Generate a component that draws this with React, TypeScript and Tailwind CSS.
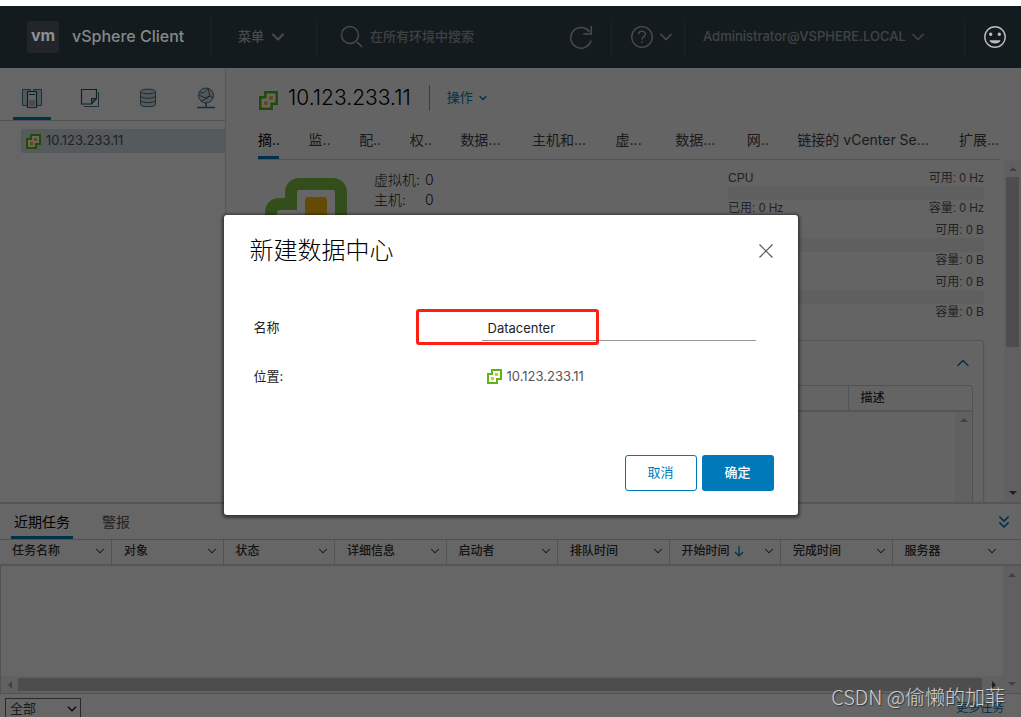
import { ChevronDown, ChevronUp, ChevronsDown } from 'lucide-react'

const TABS = [
  { label: '摘..', width: 'w-[21px]' },
  { label: '监..', width: 'w-[21px]' },
  { label: '配..', width: 'w-[21px]' },
  { label: '权..', width: 'w-[21px]' },
  { label: '数据...', width: 'w-[42px]' },
  { label: '主机和...', width: 'w-[54px]' },
  { label: '虚...', width: 'w-[30px]' },
  { label: '数据...', width: 'w-[42px]' },
  { label: '网..', width: 'w-[21px]' },
  { label: '链接的 vCenter Se...', width: 'w-[132px]' },
  { label: '扩展...', width: 'w-[42px]' },
]

const USAGE = [
  { name: 'CPU', free: '可用: 0 Hz', used: '已用: 0 Hz', total: '容量: 0 Hz' },
  { name: '内存', free: '可用: 0 B', used: '已用: 0 B', total: '容量: 0 B' },
  { name: '存储', free: '可用: 0 B', used: '已用: 0 B', total: '容量: 0 B' },
]

const COLUMNS = [
  '任务名称',
  '对象',
  '状态',
  '详细信息',
  '启动者',
  '排队时间',
  '开始时间',
  '完成时间',
  '服务器',
]

function VCenterIcon({ className }: { className: string }) {
  return (
    <svg viewBox="0 0 15 15" className={className} aria-hidden="true">
      <path d="M5 1h9v9h-4v4H1V5h4z" fill="#fff" stroke="#5eb715" strokeWidth="2" />
      <path d="M8 4h3v3H8zM4 8h3v3H4z" fill="#fdb32b" />
    </svg>
  )
}

function VCenterLogo() {
  return (
    <svg viewBox="0 0 82 82" className="size-[82px] shrink-0" aria-hidden="true">
      <path
        d="M35 6h32q9 0 9 9v34q0 9-9 9h-9v9q0 9-9 9H15q-9 0-9-9V35q0-9 9-9h11V15q0-9 9-9z"
        fill="#fff"
        stroke="#7fc241"
        strokeWidth="12"
      />
      <rect x="40" y="19" width="22" height="22" rx="3" fill="#fdb913" />
      <rect x="20" y="40" width="22" height="22" rx="3" fill="#fdb913" />
    </svg>
  )
}

function Arrow({ dir, className }: { dir: 'up' | 'down' | 'left' | 'right'; className: string }) {
  const paths = {
    up: 'M0 6l4-4 4 4z',
    down: 'M0 2l4 4 4-4z',
    left: 'M6 0L2 4l4 4z',
    right: 'M2 0l4 4-4 4z',
  }
  return (
    <svg viewBox="0 0 8 8" className={`size-2 shrink-0 fill-current ${className}`} aria-hidden="true">
      <path d={paths[dir]} />
    </svg>
  )
}

function Header() {
  return (
    <header className="flex h-[62px] shrink-0 items-center bg-[#34454f] text-[#b8bcbe]">
      <div className="flex h-10 w-[211px] shrink-0 items-center border-r border-[#4b565d] pl-[27px]">
        <span className="flex size-8 items-center justify-center rounded-[3px] bg-[#555f6e]">
          <span className="relative z-20 pb-1 font-['Inter'] text-base leading-none font-bold text-[#8e9092]">
            vm
          </span>
        </span>
        <a href="#home" className="relative z-20 ml-[13px] pb-0.5 text-base font-medium whitespace-nowrap text-[#85898b]">
          vSphere Client
        </a>
      </div>
      <button className="flex h-10 w-[106px] shrink-0 items-center gap-1 border-r border-[#4b565d] pl-[27px] text-[13px] font-medium">
        菜单
        <ChevronDown className="size-5" strokeWidth={2.5} />
      </button>
      <label className="flex min-w-0 flex-1 items-center gap-1.5 pl-[23px]">
        <svg viewBox="0 0 24 24" className="size-6 shrink-0" fill="none" stroke="currentColor" aria-hidden="true">
          <circle cx="10" cy="10" r="8.5" strokeWidth="1.4" />
          <path d="M17 17l5 5" strokeWidth="1.6" />
        </svg>
        <input
          type="text"
          aria-label="搜索"
          placeholder="在所有环境中搜索"
          className="w-full min-w-0 bg-transparent text-[13px] font-medium placeholder:text-[#9ba2a6]"
        />
      </label>
      <button aria-label="刷新" className="flex h-10 w-[43px] shrink-0 items-center border-r border-[#4b565d]">
        <svg viewBox="0 0 24 24" className="size-6" fill="none" stroke="currentColor" strokeWidth="1.5" aria-hidden="true">
          <path d="M22 15.5A10.3 10.3 0 1 1 20.5 7M22.3 1v8h-8" />
        </svg>
      </button>
      <button aria-label="帮助" className="flex h-10 w-[73px] shrink-0 items-center gap-0.5 border-r border-[#4b565d] pl-[18px]">
        <svg viewBox="0 0 24 24" className="size-6" fill="none" stroke="currentColor" strokeWidth="1.3" aria-hidden="true">
          <circle cx="12" cy="12" r="10.3" />
          <path d="M8.6 9.2c0-4 6.8-4 6.8 0 0 2.6-3.4 2.3-3.4 5.3M12 16.2v1.8" />
        </svg>
        <ChevronDown className="size-5" strokeWidth={2} />
      </button>
      <button className="flex h-10 w-[280px] shrink-0 items-center gap-0.5 border-r border-[#4b565d] pl-[18px] text-[13px] font-medium text-[#a3a9ac]">
        Administrator@VSPHERE.LOCAL
        <ChevronDown className="size-5" strokeWidth={2} />
      </button>
      <button aria-label="反馈" className="relative z-20 flex w-14 shrink-0 items-center pl-[18px] text-[#b9bdbf]">
        <svg viewBox="0 0 24 24" className="size-6" fill="none" stroke="currentColor" strokeWidth="1.4" aria-hidden="true">
          <circle cx="12" cy="12" r="10.2" />
          <circle cx="7.7" cy="9.3" r="1" fill="currentColor" />
          <circle cx="16.3" cy="9.3" r="1" fill="currentColor" />
          <path d="M6.500 15.2h11c-.8 4.4-10.2 4.4-11 0z" fill="currentColor" stroke="none" />
        </svg>
      </button>
    </header>
  )
}

function Inventory() {
  return (
    <aside className="w-[226px] shrink-0 border-r border-[#dadada]">
      <nav className="flex h-[53px] border-b border-[#ccc] pl-[13px] text-[#25556c]">
        <button aria-label="主机和集群" className="mr-5 flex w-[38px] items-center justify-center border-b-[3px] border-[#0079b8] pt-3">
          <svg viewBox="0 0 20 20" className="size-5" fill="none" stroke="currentColor" aria-hidden="true">
            <path d="M5.5 16.5h-5v-16h8v3M14.5 16.5h5v-16h-8v3" stroke="#4a7388" fill="#cfdbe1" />
            <path d="M5.5 2.5h9v16h-9z" fill="#f4f8fa" strokeWidth="1.2" />
            <path d="M7 11h6v6H7z" fill="#bbb" stroke="none" />
            <path d="M7 5.5h6" />
          </svg>
        </button>
        <button aria-label="虚拟机和模板" className="mr-5 flex w-[38px] items-center justify-center pt-2">
          <svg viewBox="0 0 20 20" className="size-5" fill="none" stroke="currentColor" aria-hidden="true">
            <path d="M4 18.5h14.500V4" stroke="#4a7388" />
            <path d="M1.500 1.500h15v9l-5 5.500h-10z" strokeWidth="1.2" />
            <path d="M11.500 16v-5.500h5z" fill="#8fa6b1" />
          </svg>
        </button>
        <button aria-label="存储" className="mr-5 flex w-[38px] items-center justify-center pt-2">
          <svg viewBox="0 0 20 20" className="size-5" fill="#d5dee3" stroke="#41697d" aria-hidden="true">
            <path d="M2.500 3.500v13c0 3 15 3 15 0v-13" />
            <ellipse cx="10" cy="3.500" rx="7.500" ry="2.300" />
            <path d="M2.500 8c0 3 15 3 15 0M2.500 12.300c0 3 15 3 15 0" fill="none" />
          </svg>
        </button>
        <button aria-label="网络" className="flex w-[38px] items-center justify-center pt-2">
          <svg viewBox="0 0 20 22" className="h-[22px] w-5" fill="none" stroke="#41697d" aria-hidden="true">
            <circle cx="10" cy="8.500" r="7.500" fill="#d5dee3" />
            <path d="M12 1.500l2 7.500-5 2-6-3M14 9l3 2M3.500 5.500c3 1 6 0 8-3.500M5 14c4-1 8-4 9-5" />
            <path d="M1 20.500h18M10 16v4" strokeWidth="1.6" />
          </svg>
        </button>
      </nav>
      <div className="mt-2 ml-[21px] flex h-6 items-center gap-[5px] rounded-l-[3px] bg-[#d5e0e7] pl-[5px] text-[13px] text-[#565656]">
        <VCenterIcon className="size-[15px] shrink-0" />
        10.123.233.11
      </div>
    </aside>
  )
}

function UsageMeters() {
  return (
    <div className="ml-auto flex w-64 shrink-0 flex-col gap-1.5 font-['Liberation_Sans','Noto_Sans_CJK_SC',sans-serif] text-xs leading-4 text-[#565656]">
      {USAGE.map((row) => (
        <div key={row.name}>
          <div className="flex justify-between">
            <span>{row.name}</span>
            <span>{row.free}</span>
          </div>
          <div className="h-3.5 rounded-[3px] bg-[#eee]" />
          <div className="flex justify-between">
            <span>{row.used}</span>
            <span>{row.total}</span>
          </div>
        </div>
      ))}
    </div>
  )
}

function Summary() {
  return (
    <div className="flex min-h-0 flex-1">
      <div className="min-w-0 flex-1 overflow-hidden pr-5 pl-[39px]">
        <div className="flex h-[180px] pt-[10px]">
          <div className="pt-2">
            <VCenterLogo />
          </div>
          <dl className="grid h-10 shrink-0 grid-cols-[51px_auto] pl-[27px] text-sm leading-5 font-light text-[#222]">
            <dt>虚拟机:</dt>
            <dd>0</dd>
            <dt>主机:</dt>
            <dd>0</dd>
          </dl>
          <UsageMeters />
        </div>
        <section className="h-[200px] rounded-[3px] border border-[#d0d0d0] px-2.5 shadow-sm">
          <div className="flex h-11 items-center justify-end">
            <button aria-label="折叠" className="text-[#0079b8]">
              <ChevronUp className="size-5" strokeWidth={1.7} />
            </button>
          </div>
          <div className="h-[160px] rounded-t-[3px] border border-[#ccc]">
            <table className="w-full table-fixed text-xs text-[#333]">
              <thead>
                <tr className="h-[25px] border-b-2 border-[#d4d4d4]">
                  <th />
                  <th className="w-[124px] border-l border-[#ccc] pl-3 text-left font-medium">描述</th>
                </tr>
              </thead>
            </table>
            <div className="ml-auto flex h-full w-[17px] justify-center bg-[#f1f1f1] pt-1">
              <Arrow dir="up" className="text-[#a3a3a3]" />
            </div>
          </div>
        </section>
      </div>
      <div className="flex w-[17px] shrink-0 flex-col items-center bg-[#f1f1f1] py-[5px]">
        <Arrow dir="up" className="text-[#a3a3a3]" />
        <div className="mt-1 h-[170px] w-[13px] bg-[#c1c1c1]" />
        <Arrow dir="down" className="mt-auto text-[#505050]" />
      </div>
    </div>
  )
}

function Detail() {
  return (
    <main className="flex min-w-0 flex-1 flex-col bg-[#fafafa]">
      <div className="flex h-[60px] shrink-0 items-center pl-[33px]">
        <VCenterIcon className="mt-1 size-[19px] shrink-0" />
        <h1 className="ml-[10px] text-[21px] font-light whitespace-nowrap text-black">10.123.233.11</h1>
        <button className="ml-[18px] flex h-[26px] items-center gap-1 border-l border-[#999] pl-[17px] text-[13px] text-[#0079b8]">
          操作
          <ChevronDown className="size-3" strokeWidth={2.5} />
        </button>
      </div>
      <nav className="mr-5 ml-8 flex h-8 shrink-0 justify-between border-b border-[#ccc] text-sm leading-6 text-[#454545]">
        {TABS.map((tab, i) => (
          <button
            key={i}
            className={`${tab.width} shrink-0 overflow-hidden border-b-[3px] pb-1 text-left whitespace-nowrap ${
              i === 0 ? 'border-[#0079b8] text-black' : 'border-transparent'
            }`}
          >
            {tab.label}
          </button>
        ))}
      </nav>
      <Summary />
    </main>
  )
}

function RecentTasks() {
  return (
    <section className="flex h-[215px] shrink-0 flex-col border-t-2 border-[#d4d4d4]">
      <div className="flex h-9 shrink-0 border-b border-[#ccc] pr-[7px] pl-[11px] text-sm">
        <button className="border-b-[3px] border-[#0079b8] px-[3px] pt-1 text-black">近期任务</button>
        <button className="ml-[26px] border-b-[3px] border-transparent px-[3px] pt-1 text-[#565656]">警报</button>
        <button aria-label="收起" className="ml-auto text-[#0079b8]">
          <ChevronsDown className="size-5" strokeWidth={2} />
        </button>
      </div>
      <table className="w-full shrink-0 table-fixed text-xs text-[#333]">
        <thead>
          <tr className="h-[25px] border-b-2 border-[#d4d4d4]">
            {COLUMNS.map((name) => (
              <th
                key={name}
                className="border-r border-[#d0d0d0] p-0 text-left font-medium last:w-[129px] last:border-0 last:pr-[18px]"
              >
                <div className="flex items-center pr-1 pb-0.5 pl-3">
                  {name}
                  {name === '开始时间' && (
                    <svg viewBox="0 0 10 12" className="ml-1 h-3 w-2.5" fill="none" stroke="#0079b8" strokeWidth="1.2" aria-hidden="true">
                      <path d="M5 1v10M1 7l4 4 4-4" />
                    </svg>
                  )}
                  <ChevronDown className="ml-auto size-3.5" strokeWidth={1.8} />
                </div>
              </th>
            ))}
          </tr>
        </thead>
      </table>
      <div className="flex min-h-0 flex-1 border-b border-l border-[#ccc]">
        <div className="flex min-w-0 flex-1 flex-col justify-end">
          <div className="flex h-[17px] items-center bg-[#f1f1f1] px-[5px]">
            <Arrow dir="left" className="text-[#a3a3a3]" />
            <div className="mx-1 h-[13px] flex-1 bg-[#c1c1c1]" />
            <Arrow dir="right" className="ml-1 text-[#505050]" />
          </div>
        </div>
        <div className="flex w-[18px] flex-col items-center justify-between bg-[#f1f1f1] py-[5px]">
          <Arrow dir="up" className="text-[#a3a3a3]" />
          <Arrow dir="down" className="text-[#a3a3a3]" />
        </div>
      </div>
      <div className="flex h-[23px] shrink-0 items-start justify-between overflow-hidden pt-1 pr-[17px] pl-[5px]">
        <div className="relative flex items-center">
          <select
            aria-label="任务筛选"
            className="h-[21px] w-[76px] appearance-none border border-[#666] bg-transparent pl-1 text-[13px] text-[#454545]"
          >
            <option>全部</option>
          </select>
          <ChevronDown className="pointer-events-none absolute right-0.5 size-3.5 text-[#333]" strokeWidth={3} />
        </div>
        <a href="#tasks" className="text-xs leading-[19px] text-[#0079b8]">
          更多任务
        </a>
      </div>
    </section>
  )
}

function NewDatacenterDialog() {
  return (
    <form
      role="dialog"
      aria-labelledby="dialog-title"
      className="flex h-[300px] w-[574px] flex-col rounded-[3px] bg-white p-6 shadow-[0_1px_3px_2px_rgba(0,0,0,0.45)]"
    >
      <div className="flex h-6 items-center justify-between">
        <h2 id="dialog-title" className="pl-0.5 text-2xl font-light text-black">
          新建数据中心
        </h2>
        <button type="button" aria-label="关闭" className="text-[#565656]">
          <svg viewBox="0 0 16 16" className="size-4" fill="none" stroke="currentColor" strokeWidth="1.2" aria-hidden="true">
            <path d="M1.500 1.500l13 13M14.500 1.500l-13 13" />
          </svg>
        </button>
      </div>
      <div className="mt-[52px] grid grid-cols-[228px_1fr] gap-y-[23px] pr-[18px] pl-1.5 text-[13px] leading-6 text-[#222]">
        <label htmlFor="name">名称</label>
        <div className="relative">
          <input
            id="name"
            type="text"
            defaultValue="Datacenter"
            className="block h-[26px] w-full border-b border-[#999] px-1.5 outline-none"
          />
          <span className="pointer-events-none absolute -top-1.5 -left-[66px] h-9 w-[183px] rounded-[3px] border-3 border-[#ff1f12]" />
        </div>
        <span>位置:</span>
        <span className="flex items-center gap-[5px] pl-[5px] text-[#565656]">
          <VCenterIcon className="size-[15px]" />
          10.123.233.11
        </span>
      </div>
      <div className="mt-auto flex justify-end gap-[5px] text-[13px]">
        <button type="button" className="h-9 w-[72px] rounded-[3px] border border-[#0079b8] text-[#0079b8]">
          取消
        </button>
        <button type="submit" className="h-9 w-[72px] rounded-[3px] bg-[#0079b8] font-medium text-white">
          确定
        </button>
      </div>
    </form>
  )
}

export default function App() {
  return (
    <div className="relative flex h-screen flex-col overflow-hidden bg-white pt-1.5 font-['Inter','Noto_Sans_CJK_SC',sans-serif]">
      <Header />
      <div className="flex min-h-0 flex-1">
        <Inventory />
        <Detail />
      </div>
      <RecentTasks />
      <div className="absolute inset-x-0 top-1.5 bottom-0 z-10 flex items-center justify-center bg-black/60 pt-[7px]">
        <NewDatacenterDialog />
      </div>
      <span className="absolute right-4 bottom-1 z-30 font-['Noto_Sans_CJK_SC',sans-serif] text-xl leading-8 font-light text-[#d0d0d0] [text-shadow:1px_1px_1px_#333]">
        CSDN @偷懒的加菲
      </span>
    </div>
  )
}
